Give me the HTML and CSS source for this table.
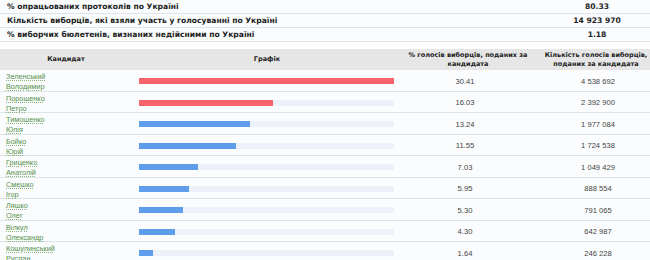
FILE: index.html
```html
<!DOCTYPE html>
<html lang="uk">
<head>
<meta charset="utf-8">
<link rel="stylesheet" href="styles.css">
</head>
<body>
<div class="page">
  <div class="summary">
    <div class="srow"><div class="slabel">% опрацьованих протоколів по Україні</div><div class="sval">80.33</div></div>
    <div class="srow"><div class="slabel">Кількість виборців, які взяли участь у голосуванні по Україні</div><div class="sval">14 923 970</div></div>
    <div class="srow"><div class="slabel">% виборчих бюлетенів, визнаних недійсними по Україні</div><div class="sval">1.18</div></div>
  </div>
  <div class="results">
    <div class="hrow">
      <div class="hcell">Кандидат</div>
      <div class="hcell">Графік</div>
      <div class="hcell">% голосів виборців, поданих за кандидата</div>
      <div class="hcell last">Кількість голосів виборців, поданих за кандидата</div>
    </div>
    <div class="row"><div class="name"><a href="#">Зеленський<br>Володимир</a></div><div class="graph"><div class="track"><div class="bar red" style="width:100%"></div></div></div><div class="pct">30.41</div><div class="cnt">4 538 692</div></div>
    <div class="row"><div class="name"><a href="#">Порошенко<br>Петро</a></div><div class="graph"><div class="track"><div class="bar red" style="width:52.7%"></div></div></div><div class="pct">16.03</div><div class="cnt">2 392 900</div></div>
    <div class="row"><div class="name"><a href="#">Тимошенко<br>Юлія</a></div><div class="graph"><div class="track"><div class="bar blue" style="width:43.5%"></div></div></div><div class="pct">13.24</div><div class="cnt">1 977 084</div></div>
    <div class="row"><div class="name"><a href="#">Бойко<br>Юрій</a></div><div class="graph"><div class="track"><div class="bar blue" style="width:38%"></div></div></div><div class="pct">11.55</div><div class="cnt">1 724 538</div></div>
    <div class="row"><div class="name"><a href="#">Гриценко<br>Анатолій</a></div><div class="graph"><div class="track"><div class="bar blue" style="width:23.1%"></div></div></div><div class="pct">7.03</div><div class="cnt">1 049 429</div></div>
    <div class="row"><div class="name"><a href="#">Смешко<br>Ігор</a></div><div class="graph"><div class="track"><div class="bar blue" style="width:19.6%"></div></div></div><div class="pct">5.95</div><div class="cnt">888 554</div></div>
    <div class="row"><div class="name"><a href="#">Ляшко<br>Олег</a></div><div class="graph"><div class="track"><div class="bar blue" style="width:17.4%"></div></div></div><div class="pct">5.30</div><div class="cnt">791 065</div></div>
    <div class="row"><div class="name"><a href="#">Вілкул<br>Олександр</a></div><div class="graph"><div class="track"><div class="bar blue" style="width:14.1%"></div></div></div><div class="pct">4.30</div><div class="cnt">642 987</div></div>
    <div class="row"><div class="name"><a href="#">Кошулинський<br>Руслан</a></div><div class="graph"><div class="track"><div class="bar blue" style="width:5.4%"></div></div></div><div class="pct">1.64</div><div class="cnt">246 228</div></div>
  </div>
</div>
</body>
</html>
```
FILE: styles.css
```css
html, body {
  margin: 0;
  padding: 0;
  background: #ffffff;
  overflow: hidden;
}
body {
  font-family: "DejaVu Sans", Verdana, sans-serif;
  color: #222;
}
.page {
  width: 650px;
}
.summary {
  display: flex;
  flex-direction: column;
  margin-bottom: 7px;
}
.srow {
  display: grid;
  grid-template-columns: 534px 116px;
  height: 13px;
  border-bottom: 1px solid #dfe4e8;
  background: #fafcfd;
  align-items: center;
  font-size: 7.6px;
  font-weight: bold;
  color: #1e1e1e;
}
.slabel {
  padding-left: 7px;
}
.sval {
  text-align: center;
  padding-left: 10px;
}
.results {
  display: flex;
  flex-direction: column;
}
.hrow {
  display: grid;
  grid-template-columns: 132px 270px 132px 116px;
  height: 21px;
  background: #e6e6e6;
  align-items: center;
  font-size: 6.5px;
  font-weight: bold;
  color: #222;
  line-height: 9px;
}
.hcell {
  text-align: center;
  padding: 0 2px;
}
.hcell.last {
  padding: 0 0 0 8px;
}
.row {
  display: grid;
  grid-template-columns: 132px 270px 132px 116px;
  height: 20.5px;
  border-bottom: 1px solid #dfe4e8;
  background: #fafcfd;
  align-items: center;
  font-family: "Liberation Sans", Arial, sans-serif;
  font-size: 7.6px;
  color: #444;
}
.name {
  padding: 2px 0 0 6px;
  line-height: 10px;
  font-size: 7.3px;
}
.name a {
  color: #55904a;
  text-decoration: underline dotted #8ab47a;
  text-underline-offset: 1px;
}
.graph {
  padding: 0 8px 0 7px;
}
.track {
  height: 6px;
  background: #edf2fa;
}
.bar {
  height: 100%;
}
.red { background: #f6636a; }
.blue { background: #5e9de9; }
.pct {
  text-align: center;
  padding-right: 6px;
}
.cnt {
  text-align: center;
  padding-left: 12px;
}
```
